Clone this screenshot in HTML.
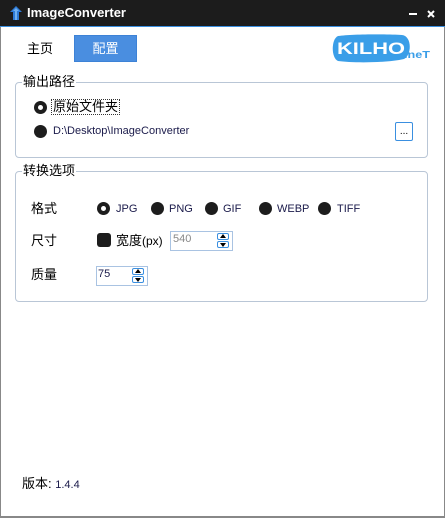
<!DOCTYPE html>
<html><head><meta charset="utf-8"><style>
*{margin:0;padding:0;box-sizing:border-box}
body{width:445px;height:518px;position:relative;background:#fff;font-family:"Liberation Sans","Noto Sans CJK SC",sans-serif;font-size:12px;color:#000;overflow:hidden}
.a{position:absolute}
.win{left:0;top:0;width:445px;height:518px;border-left:1px solid #888;border-right:1px solid #888;border-bottom:2px solid #888}
.title{left:0;top:0;width:445px;height:27px;background:#1c1c1c;border-bottom:1px solid #3a8fe0}
.grp{border:1px solid #b9c6d6;border-radius:4px}
.leg{background:#fff;padding:0 1px;font-size:13px;line-height:14px}
.rad{width:13px;height:13px;border-radius:50%;background:#1d1d1d}
.rad.on::after{content:"";position:absolute;left:4px;top:4px;width:5px;height:5px;border-radius:50%;background:#fff}
.lbl{font-size:13px;line-height:16px}
.sm{font-size:11px;line-height:14px;color:#1a1a4a}
.spin{border:1px solid #a9c3e2;background:#fff}
.arr{width:12px;height:7px;border:1px solid #3a8fe0;border-radius:2px;background:#fff}
</style></head><body>
<div class="a win"></div>
<div class="a title"></div>
<svg class="a" style="left:9px;top:6px" width="14" height="15" viewBox="0 0 14 15"><path d="M7 0L1 6h3v8h6V6h3z" fill="#2d7ad6"/><path d="M7 2L4 5h2v9h2V5h2z" fill="#6fb0f0"/></svg>
<div class="a" style="left:27px;top:5px;color:#fff;font-weight:bold;font-size:13px;line-height:16px">ImageConverter</div>
<div class="a" style="left:409px;top:13px;width:8px;height:2px;background:#fff"></div>
<svg class="a" style="left:427px;top:10px" width="8" height="8" viewBox="0 0 8 8"><path d="M1 1L7 7M7 1L1 7" stroke="#fff" stroke-width="2"/></svg>

<div class="a lbl" style="left:27px;top:41px">主页</div>
<div class="a" style="left:74px;top:35px;width:63px;height:27px;background:#4a8ee0;border:1px solid #3d82d6;color:#fff;font-size:13px;text-align:center;line-height:25px">配置</div>
<svg class="a" style="left:332px;top:33px" width="100" height="30" viewBox="0 0 100 30"><path d="M6 3 C20 1 55 1 70 2 C80 3 80 22 72 26 C55 30 20 30 6 28 C-1 25 -1 6 6 3Z" fill="#3a9ee8"/><text x="5" y="21" font-family="Liberation Sans" font-weight="bold" font-size="17" fill="#fff" textLength="68" lengthAdjust="spacingAndGlyphs">KILHO</text><text x="72" y="25" font-family="Liberation Sans" font-weight="bold" font-size="10" fill="#3a9ee8" textLength="26" lengthAdjust="spacingAndGlyphs">.neT</text></svg>

<div class="a grp" style="left:15px;top:82px;width:413px;height:76px"></div>
<div class="a leg" style="left:22px;top:75px">输出路径</div>
<div class="a rad on" style="left:34px;top:101px"></div>
<div class="a lbl" style="left:51px;top:99px;border:1px dotted #333;padding:0 1px;line-height:14px">原始文件夹</div>
<div class="a rad" style="left:34px;top:125px"></div>
<div class="a sm" style="left:53px;top:124px">D:\Desktop\ImageConverter</div>
<div class="a" style="left:395px;top:122px;width:18px;height:19px;border:1px solid #3a8fe0;border-radius:2px;font-size:10px;text-align:center;line-height:17px">...</div>

<div class="a grp" style="left:15px;top:171px;width:413px;height:131px"></div>
<div class="a leg" style="left:22px;top:164px">转换选项</div>
<div class="a lbl" style="left:31px;top:201px">格式</div>
<div class="a rad on" style="left:97px;top:202px"></div><div class="a sm" style="left:116px;top:202px">JPG</div>
<div class="a rad" style="left:151px;top:202px"></div><div class="a sm" style="left:169px;top:202px">PNG</div>
<div class="a rad" style="left:205px;top:202px"></div><div class="a sm" style="left:223px;top:202px">GIF</div>
<div class="a rad" style="left:259px;top:202px"></div><div class="a sm" style="left:277px;top:202px">WEBP</div>
<div class="a rad" style="left:318px;top:202px"></div><div class="a sm" style="left:337px;top:202px">TIFF</div>

<div class="a lbl" style="left:31px;top:233px">尺寸</div>
<div class="a" style="left:97px;top:233px;width:14px;height:14px;border-radius:3px;background:#1d1d1d"></div>
<div class="a lbl" style="left:116px;top:233px">宽度<span style="font-size:12px">(px)</span></div>
<div class="a spin" style="left:170px;top:231px;width:63px;height:20px"></div>
<div class="a" style="left:173px;top:233px;font-size:11px;color:#888">540</div>
<div class="a arr" style="left:217px;top:233px"></div><div class="a arr" style="left:217px;top:241px"></div>
<div class="a" style="left:220px;top:234px;width:0;height:0;border-left:3px solid transparent;border-right:3px solid transparent;border-bottom:4px solid #000"></div>
<div class="a" style="left:220px;top:243px;width:0;height:0;border-left:3px solid transparent;border-right:3px solid transparent;border-top:4px solid #000"></div>

<div class="a lbl" style="left:31px;top:267px">质量</div>
<div class="a spin" style="left:96px;top:266px;width:52px;height:20px"></div>
<div class="a" style="left:98px;top:268px;font-size:11px;color:#1a1a4a">75</div>
<div class="a arr" style="left:132px;top:268px"></div><div class="a arr" style="left:132px;top:276px"></div>
<div class="a" style="left:135px;top:269px;width:0;height:0;border-left:3px solid transparent;border-right:3px solid transparent;border-bottom:4px solid #000"></div>
<div class="a" style="left:135px;top:278px;width:0;height:0;border-left:3px solid transparent;border-right:3px solid transparent;border-top:4px solid #000"></div>

<div class="a lbl" style="left:22px;top:476px">版本: <span style="font-size:11px;color:#1a1a4a">1.4.4</span></div>
</body></html>
